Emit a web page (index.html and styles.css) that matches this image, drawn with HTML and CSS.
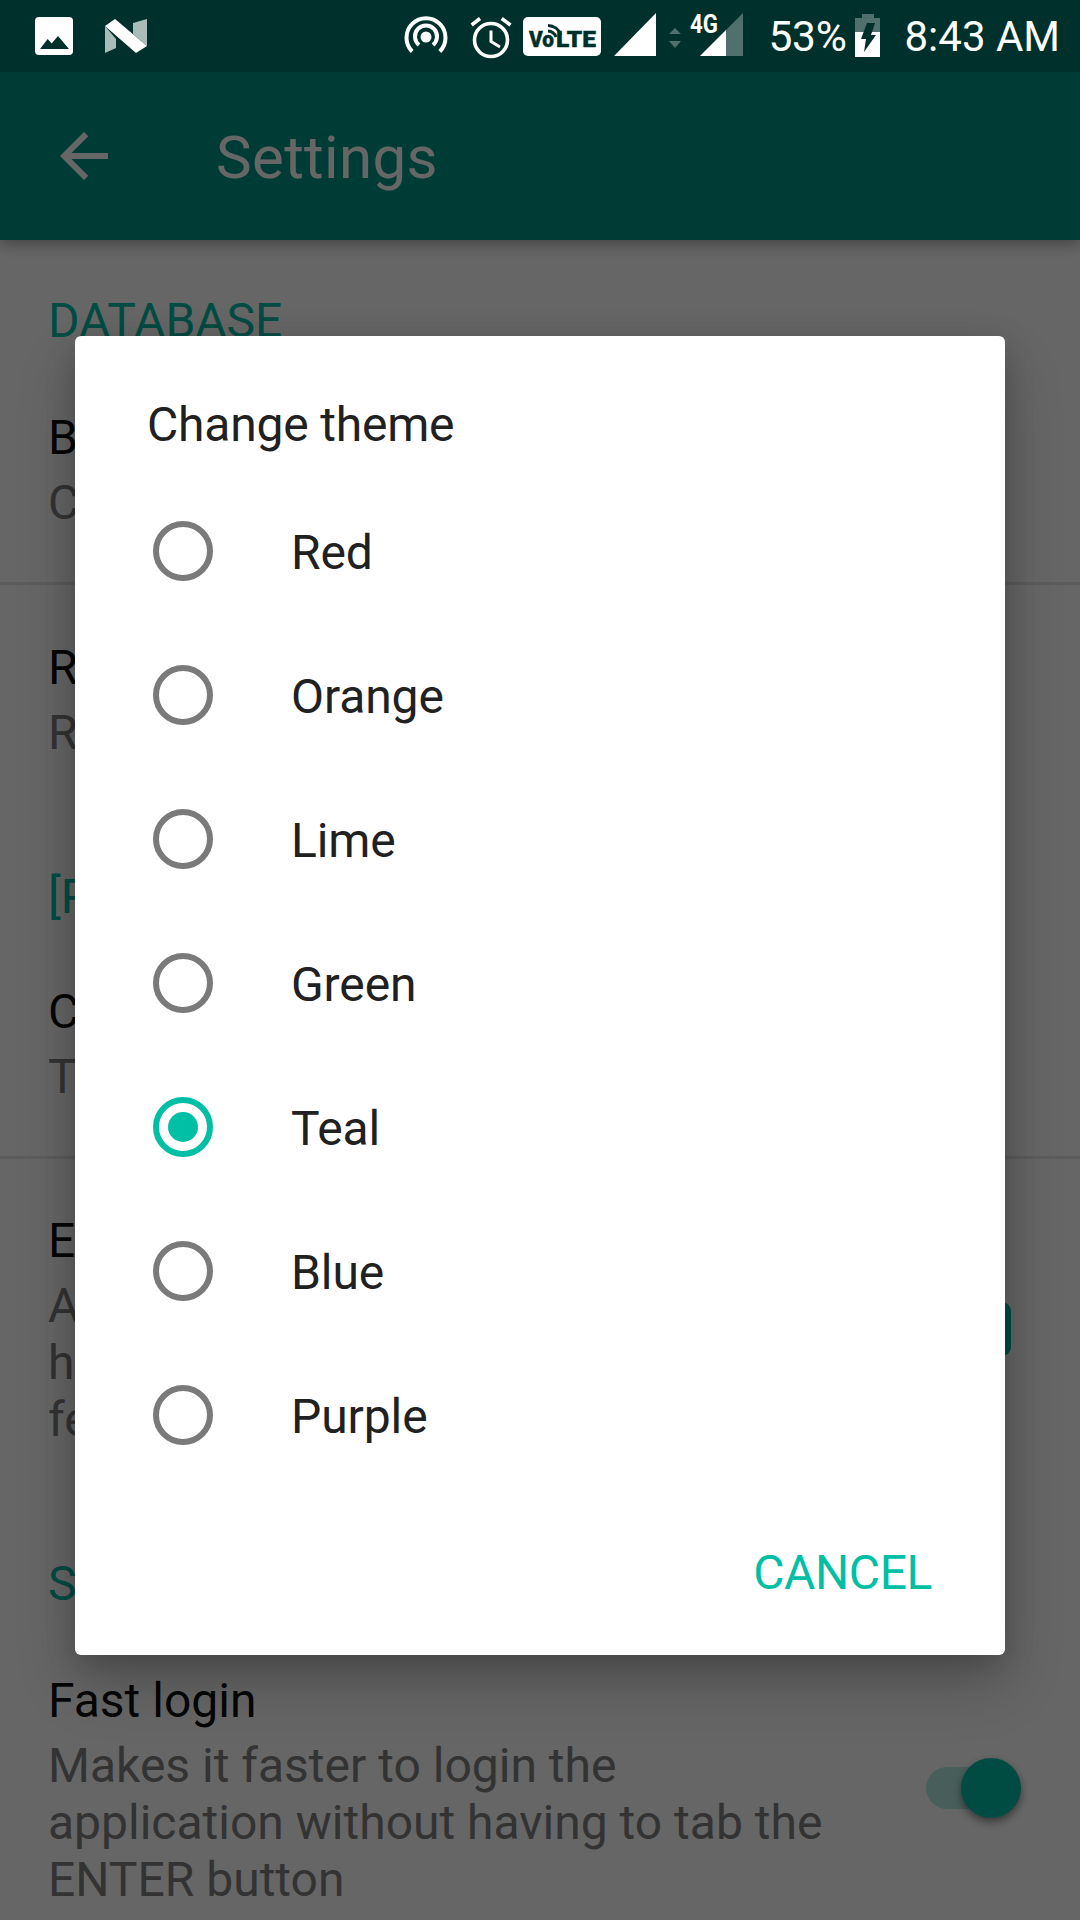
FILE: index.html
```html
<!DOCTYPE html>
<html lang="en">
<head>
<meta charset="utf-8">
<title>Settings</title>
<link rel="stylesheet" href="styles.css">
</head>
<body>
<div class="screen">
  <div class="statusbar">
    <svg class="sb-image" width="38" height="38" viewBox="0 0 38 38"><rect width="38" height="38" rx="4" fill="#fff"/><path d="M5 32 L12.7 22 L16.7 26.5 L23 19 L34 32 Z" fill="#00302b"/></svg>
    <svg class="sb-n" width="42" height="35" viewBox="0 0 42 35"><path d="M0 7 V34 L11 29 V20 Z" fill="#a9bcb9"/><path d="M28 4 L42 0 V27 L28 15 Z" fill="#a9bcb9"/><path d="M0 7 L10 0 L42 27 L31 34 Z" fill="#fff"/></svg>
    <span class="sb-spacer"></span>
    <svg class="sb-hotspot" width="44" height="42" viewBox="0 0 44 42"><circle cx="22" cy="21" r="5.5" fill="#fff"/><path d="M15 29 A 11 11 0 1 1 29 29" fill="none" stroke="#fff" stroke-width="4"/><path d="M8.2 35.5 A 19.5 19.5 0 1 1 35.8 35.5" fill="none" stroke="#fff" stroke-width="4"/></svg>
    <svg class="sb-alarm" width="42" height="43" viewBox="0 0 42 43"><circle cx="21" cy="24" r="16.5" fill="none" stroke="#fff" stroke-width="3.6"/><path d="M1.7 9 L10 2.5 M31.7 2.5 L40.5 9" stroke="#fff" stroke-width="3.6" fill="none"/><path d="M21 14.5 V25.5 L30 31" stroke="#fff" stroke-width="3" fill="none"/></svg>
    <svg class="sb-volte" width="78" height="39" viewBox="0 0 78 39"><rect width="78" height="39" rx="5" fill="#fff"/><text class="volte-text" x="6" y="30" textLength="25" lengthAdjust="spacingAndGlyphs">Vo</text><text class="volte-text" x="33" y="30" textLength="40" lengthAdjust="spacingAndGlyphs">LTE</text><path d="M25 14 A 9 9 0 0 1 33 20 M25 8.5 A 14 14 0 0 1 38 18" fill="none" stroke="#00302b" stroke-width="2.8"/></svg>
    <svg class="sb-signal" width="42" height="43" viewBox="0 0 42 43"><path d="M0 43 H42 V0 Z" fill="#fff"/></svg>
    <svg class="sb-arrows" width="12" height="20" viewBox="0 0 12 20"><path d="M0 6 L6 0 L12 6 Z M0 13 H12 L6 20 Z" fill="#4f706c"/></svg>
    <svg class="sb-4g" width="53" height="43" viewBox="0 0 53 43"><path d="M10 43 L53 0 V43 Z" fill="#4f706c"/><path d="M10 43 L36 17 V43 Z" fill="#fff"/><rect x="0" y="0" width="30" height="22" fill="#00302b"/><text class="fourg-text" x="0" y="20" textLength="28" lengthAdjust="spacingAndGlyphs">4G</text></svg>
    <span class="sb-percent">53%</span>
    <svg class="sb-battery" width="25" height="43" viewBox="0 0 25 43"><path d="M7 0 H19 V4 H25 V18 H0 V4 H7 Z" fill="#4f706c"/><rect y="18" width="25" height="25" fill="#fff"/><path d="M12 9 H20 L16 21 H21 L9 38 L11 25 H6 Z" fill="#00302b"/></svg>
    <span class="sb-time">8:43 AM</span>
  </div>

  <header class="appbar">
    <svg class="back" width="72" height="72" viewBox="0 0 24 24"><path d="M20 11H7.83l5.59-5.59L12 4l-8 8 8 8 1.41-1.41L7.83 13H20v-2z" fill="#fff"/></svg>
    <h1 class="appbar-title">Settings</h1>
  </header>

  <main class="prefs">
    <h2 class="section section-first">DATABASE</h2>
    <div class="row row-after-section">
      <div class="row-text"><div class="row-title">Backup</div><div class="row-desc">Create a backup of your data</div></div>
    </div>
    <hr class="divider">
    <div class="row">
      <div class="row-text"><div class="row-title">Restore</div><div class="row-desc">Restore data from a backup</div></div>
    </div>
    <h2 class="section">[PREMIUM] APPEARANCE</h2>
    <div class="row row-tight">
      <div class="row-text"><div class="row-title">Change theme</div><div class="row-desc">Teal</div></div>
    </div>
    <hr class="divider">
    <div class="row row-premium">
      <div class="row-text"><div class="row-title">Enable premium</div><div class="row-desc">Additional options that are<br>hidden by default for advanced<br>features</div></div>
      <div class="row-button"></div>
    </div>
    <h2 class="section">SECURITY</h2>
    <div class="row row-loose">
      <div class="row-text"><div class="row-title">Fast login</div><div class="row-desc">Makes it faster to login the<br>application without having to tab the<br>ENTER button</div></div>
      <div class="toggle"><span class="toggle-track"></span><span class="toggle-thumb"></span></div>
    </div>
  </main>

  <div class="scrim">
    <section class="dialog">
      <h2 class="dialog-title">Change theme</h2>
      <ul class="options">
        <li class="option"><span class="radio"></span><span class="option-label">Red</span></li>
        <li class="option"><span class="radio"></span><span class="option-label">Orange</span></li>
        <li class="option"><span class="radio"></span><span class="option-label">Lime</span></li>
        <li class="option"><span class="radio"></span><span class="option-label">Green</span></li>
        <li class="option"><span class="radio radio-on"></span><span class="option-label">Teal</span></li>
        <li class="option"><span class="radio"></span><span class="option-label">Blue</span></li>
        <li class="option"><span class="radio"></span><span class="option-label">Purple</span></li>
      </ul>
      <div class="actions"><span class="cancel">CANCEL</span></div>
    </section>
  </div>
</div>
</body>
</html>
```
FILE: styles.css
```css
* { box-sizing: border-box; }
html, body { margin: 0; padding: 0; }
body { background: #fff; font-family: Roboto, "Liberation Sans", sans-serif; }
.screen { position: relative; width: 1080px; height: 1920px; overflow: hidden; background: #fff; }

.statusbar { position: relative; z-index: 3; display: flex; align-items: center; height: 72px; padding-left: 35px; background: #00302b; color: #fff; }
.statusbar svg { flex: none; display: block; }
.sb-image { margin-top: -1px; }
.sb-n { margin-left: 32px; }
.sb-spacer { flex: 1; }
.sb-hotspot { margin-top: 2px; }
.sb-alarm { margin-left: 22px; margin-top: 2px; }
.sb-volte { margin-left: 11px; margin-top: 1px; }
.sb-signal { margin-left: 13px; margin-top: -3px; }
.sb-arrows { margin-left: 13px; margin-top: 4px; }
.sb-4g { margin-left: 9px; margin-top: -3px; }
.sb-percent { margin-left: 26px; margin-top: 2px; font-size: 42.5px; line-height: 72px; letter-spacing: -.3px; }
.sb-battery { margin-left: 8px; margin-top: -1px; }
.sb-time { margin-left: 25px; margin-right: 20px; margin-top: 2px; font-size: 42px; line-height: 72px; }
.volte-text { font-family: Roboto, sans-serif; font-size: 22px; font-weight: 900; fill: #00302b; stroke: #00302b; stroke-width: .4px; }
.fourg-text { font-family: Roboto, sans-serif; font-size: 25px; font-weight: 700; fill: #fff; }

.appbar { position: relative; z-index: 1; display: flex; align-items: center; height: 168px; padding-left: 48px; background: #009688; box-shadow: 0 4px 14px rgba(0, 0, 0, .35); }
.back { flex: none; display: block; }
.appbar-title { margin: 0 0 0 96px; font-size: 60px; line-height: 72px; font-weight: 400; letter-spacing: .35px; color: #fff; position: relative; top: 2px; }

.prefs { display: block; }
.section { margin: 0; padding: 56px 48px 0; font-size: 48px; line-height: 57px; font-weight: 400; color: #00bfa5; white-space: nowrap; }
.section-first { padding-top: 52px; }
.row { display: flex; align-items: center; padding: 54px 69px 51px 48px; }
.row-after-section { padding-top: 60px; }
.row-tight { padding-top: 58px; }
.row-premium { padding-top: 53px; }
.row-loose { padding-top: 60px; padding-right: 59px; }
.row-text { flex: 1; min-width: 0; }
.row-title { font-size: 48px; line-height: 57px; color: rgba(0, 0, 0, .95); white-space: nowrap; }
.row-desc { margin-top: 8px; font-size: 48px; line-height: 57px; color: #808080; white-space: nowrap; }
.divider { margin: 0; border: 0; height: 3px; background: #e6e6e6; }
.row-button { flex: none; width: 180px; height: 54px; margin-left: auto; margin-bottom: 2px; border-radius: 9px; background: #00bfa5; }
.toggle { position: relative; flex: none; width: 95px; height: 60px; margin-left: auto; margin-bottom: 4px; }
.toggle-track { position: absolute; left: 0; right: 9px; top: 9px; height: 42px; border-radius: 21px; background: rgba(0, 191, 165, .3); }
.toggle-thumb { position: absolute; right: 0; top: 0; width: 60px; height: 60px; border-radius: 50%; background: #00bfa5; box-shadow: 0 4px 8px rgba(0, 0, 0, .45); }

.scrim { position: absolute; z-index: 2; left: 0; right: 0; top: 72px; bottom: 0; padding-bottom: 1px; display: flex; align-items: center; justify-content: center; background: rgba(0, 0, 0, .6); }
.dialog { width: 930px; height: 1319px; padding-top: 60px; border-radius: 6px; background: #fff; box-shadow: 0 30px 60px rgba(0, 0, 0, .2), 0 8px 30px rgba(0, 0, 0, .18); }
.dialog-title { margin: 0; padding-left: 72px; font-size: 48px; line-height: 57px; font-weight: 400; letter-spacing: -.2px; color: #212121; }
.options { margin: 26px 0 0; padding: 0; list-style: none; }
.option { display: flex; align-items: center; height: 144px; padding-left: 78px; font-size: 48px; color: #212121; }
.option-label { padding-top: 2px; letter-spacing: -.1px; }
.radio { flex: none; position: relative; width: 60px; height: 60px; margin-right: 78px; border: 6px solid #7a7a7a; border-radius: 50%; }
.radio-on { border-color: #00bfa5; }
.radio-on::after { content: ""; position: absolute; left: 9px; top: 9px; width: 30px; height: 30px; border-radius: 50%; background: #00bfa5; }
.actions { display: flex; justify-content: flex-end; padding: 57px 73px 0 0; }
.cancel { font-size: 48px; line-height: 57px; letter-spacing: -.4px; color: #00bfa5; }
```
